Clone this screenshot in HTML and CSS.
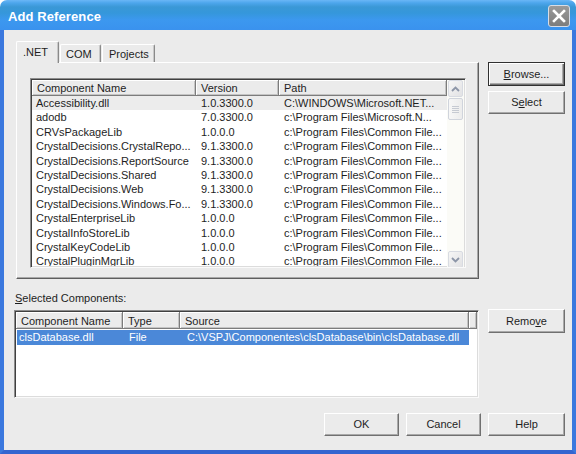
FILE: index.html
```html
<!DOCTYPE html>
<html>
<head>
<meta charset="utf-8">
<link rel="stylesheet" href="styles.css">
</head>
<body>
<div class="window">
  <div class="titlebar">
    <span class="title">Add Reference</span>
    <span class="close">
      <svg width="14" height="14" viewBox="0 0 14 14"><path d="M2 2 L12 12 M12 2 L2 12" stroke="#fff" stroke-width="2.6" stroke-linecap="square"/></svg>
    </span>
  </div>
  <div class="client">
    <div class="top">
      <div class="tabs-area">
        <div class="tabstrip">
          <div class="tab active">.NET</div>
          <div class="tab">COM</div>
          <div class="tab">Projects</div>
        </div>
        <div class="panel">
          <div class="listbox list1">
            <div class="lv-main">
              <div class="lv-head cols1">
                <div class="hcell">Component Name</div>
                <div class="hcell">Version</div>
                <div class="hcell">Path</div>
              </div>
              <div class="lv-body">
                <div class="lv-row cols1 inactive-sel"><span>Accessibility.dll</span><span>1.0.3300.0</span><span>C:\WINDOWS\Microsoft.NET...</span></div>
                <div class="lv-row cols1"><span>adodb</span><span>7.0.3300.0</span><span>c:\Program Files\Microsoft.N...</span></div>
                <div class="lv-row cols1"><span>CRVsPackageLib</span><span>1.0.0.0</span><span>c:\Program Files\Common File...</span></div>
                <div class="lv-row cols1"><span>CrystalDecisions.CrystalRepo...</span><span>9.1.3300.0</span><span>c:\Program Files\Common File...</span></div>
                <div class="lv-row cols1"><span>CrystalDecisions.ReportSource</span><span>9.1.3300.0</span><span>c:\Program Files\Common File...</span></div>
                <div class="lv-row cols1"><span>CrystalDecisions.Shared</span><span>9.1.3300.0</span><span>c:\Program Files\Common File...</span></div>
                <div class="lv-row cols1"><span>CrystalDecisions.Web</span><span>9.1.3300.0</span><span>c:\Program Files\Common File...</span></div>
                <div class="lv-row cols1"><span>CrystalDecisions.Windows.Fo...</span><span>9.1.3300.0</span><span>c:\Program Files\Common File...</span></div>
                <div class="lv-row cols1"><span>CrystalEnterpriseLib</span><span>1.0.0.0</span><span>c:\Program Files\Common File...</span></div>
                <div class="lv-row cols1"><span>CrystalInfoStoreLib</span><span>1.0.0.0</span><span>c:\Program Files\Common File...</span></div>
                <div class="lv-row cols1"><span>CrystalKeyCodeLib</span><span>1.0.0.0</span><span>c:\Program Files\Common File...</span></div>
                <div class="lv-row cols1"><span>CrystalPluginMgrLib</span><span>1.0.0.0</span><span>c:\Program Files\Common File...</span></div>
              </div>
            </div>
            <div class="vscroll">
              <div class="sbtn">
                <svg width="9" height="6" viewBox="0 0 9 6"><path d="M1 5 L4.5 1.5 L8 5" fill="none" stroke="#8d96a8" stroke-width="1.8"/></svg>
              </div>
              <div class="thumb"><span class="grip"></span></div>
              <div class="track"></div>
              <div class="sbtn">
                <svg width="9" height="6" viewBox="0 0 9 6"><path d="M1 1 L4.5 4.5 L8 1" fill="none" stroke="#8d96a8" stroke-width="1.8"/></svg>
              </div>
            </div>
          </div>
        </div>
      </div>
      <div class="side">
        <div class="btn default"><span><u>B</u>rowse...</span></div>
        <div class="btn select-btn"><span>S<u>e</u>lect</span></div>
      </div>
    </div>
    <div class="label"><u>S</u>elected Components:</div>
    <div class="row2">
      <div class="listbox list2">
        <div class="lv-head cols2">
          <div class="hcell">Component Name</div>
          <div class="hcell">Type</div>
          <div class="hcell">Source</div>
          <div class="hcell"></div>
        </div>
        <div class="lv-row2 cols2 sel"><span>clsDatabase.dll</span><span>File</span><span>C:\VSPJ\Componentes\clsDatabase\bin\clsDatabase.dll</span></div>
      </div>
      <div class="btn remove-btn"><span>Remo<u>v</u>e</span></div>
    </div>
    <div class="bottom">
      <div class="btn w75">OK</div>
      <div class="btn w75">Cancel</div>
      <div class="btn w77">Help</div>
    </div>
  </div>
</div>
</body>
</html>
```
FILE: styles.css
```css
* { box-sizing: border-box; }
html, body {
  margin: 0;
  padding: 0;
  background: #ffffff;
}
body {
  font-family: "Liberation Sans", Arial, sans-serif;
  font-size: 11px;
  color: #1e1e1e;
}
.window {
  width: 576px;
  height: 454px;
  display: flex;
  flex-direction: column;
}
.titlebar {
  height: 30px;
  flex: none;
  display: flex;
  align-items: center;
  justify-content: space-between;
  padding: 0 6px 0 8px;
  border-radius: 7px 7px 0 0;
  background: linear-gradient(to bottom, #6ab6f6 0px, #4ca6ec 3px, #3a98d6 7px, #3597db 13px, #3c98ef 20px, #3a92ee 30px);
}
.title {
  color: #ffffff;
  font-weight: bold;
  font-size: 13px;
  letter-spacing: 0.1px;
  padding-top: 2px;
}
.close {
  width: 22px;
  height: 22px;
  border-radius: 3px;
  border: 1px solid #d8dde6;
  background: linear-gradient(to bottom, #9a9a9a, #7d7d7d);
  display: flex;
  align-items: center;
  justify-content: center;
  margin-top: 2px;
}
.client {
  flex: 1;
  background: #ebebeb;
  border-left: 4px solid #3b78de;
  border-right: 4px solid #3b78de;
  border-bottom: 4px solid #3465d0;
  padding: 0 7px 0 10px;
  display: flex;
  flex-direction: column;
}
.top {
  margin-top: 11px;
  display: flex;
}
.tabs-area {
  margin-left: 2px;
  width: 463px;
}
.tabstrip {
  height: 21px;
  display: flex;
  align-items: flex-end;
  position: relative;
  z-index: 2;
}
.tab {
  height: 18px;
  padding: 3px 5px 0 6px;
  background: #ebebeb;
  border-top: 1px solid #ffffff;
  border-left: 1px solid #ffffff;
  border-right: 1px solid #8a8a8a;
  box-shadow: inset -1px 0 #c8c8c8;
  border-radius: 2px 2px 0 0;
  margin-right: 1px;
  line-height: 13px;
}
.tab.active {
  height: 22px;
  width: 43px;
  padding: 4px 0 0 6px;
  margin-bottom: -1px;
}
.tab:nth-child(2) { width: 41px; padding-left: 5px; }
.tab:nth-child(3) { width: 53px; padding-left: 6px; }
.panel {
  height: 217px;
  border-top: 1px solid #ffffff;
  border-left: 1px solid #ffffff;
  border-right: 1px solid #5e5e5e;
  border-bottom: 1px solid #5e5e5e;
  box-shadow: inset -1px -1px #a8a8a8;
  padding: 15px 0 0 13px;
}
.listbox {
  background: #ffffff;
  border-top: 1px solid #8c8c8c;
  border-left: 1px solid #8c8c8c;
  border-right: 1px solid #fafafa;
  border-bottom: 1px solid #fafafa;
  box-shadow: inset 1px 1px #404040, inset -1px -1px #dcdcdc;
  padding: 1px;
  overflow: hidden;
}
.list1 {
  width: 436px;
  height: 190px;
  display: flex;
}
.lv-main {
  width: 415px;
  overflow: hidden;
}
.lv-head {
  display: grid;
  height: 16px;
  background: #ebebeb;
}
.cols1 { grid-template-columns: 164px 83px 168px; }
.cols2 { grid-template-columns: 107px 57px 289px 8px; }
.hcell {
  border-right: 1px solid #7c7c7c;
  border-bottom: 1px solid #7c7c7c;
  box-shadow: inset 1px 1px #ffffff, inset -1px -1px #c4c4c4;
  padding: 1px 0 0 5px;
  line-height: 14px;
  white-space: nowrap;
  overflow: hidden;
}
.lv-body { }
.lv-row {
  display: grid;
  height: 14.4px;
  line-height: 14px;
  white-space: nowrap;
}
.lv-row span, .lv-row2 span {
  padding-left: 4px;
  overflow: hidden;
  white-space: nowrap;
}
.lv-row span:nth-child(2), .lv-row span:nth-child(3) { padding-left: 5px; }
.inactive-sel { background: #ececec; }
.vscroll {
  width: 17px;
  height: 188px;
  background: #fbfbf7;
  display: flex;
  flex-direction: column;
  padding: 0 0 0 0;
}
.sbtn {
  height: 17px;
  margin: 0 1px;
  border: 1px solid #d8dbe2;
  border-radius: 2px;
  background: linear-gradient(to bottom right, #f6f6f6, #e2e2e4);
  display: flex;
  align-items: center;
  justify-content: center;
}
.thumb {
  height: 22px;
  margin: 1px 1px 0 1px;
  border: 1px solid #d0d4dc;
  border-radius: 2px;
  background: linear-gradient(to right, #f7f7f7, #ececec);
  display: flex;
  align-items: center;
  justify-content: center;
}
.grip {
  width: 7px;
  height: 7px;
  background: repeating-linear-gradient(to bottom, #c6cad2 0 1px, transparent 1px 2px);
}
.track { flex: 1; }
.side {
  margin-left: 9px;
  width: 77px;
  padding-top: 21px;
  display: flex;
  flex-direction: column;
}
.btn {
  height: 23px;
  background: #ebebeb;
  border-top: 1px solid #ffffff;
  border-left: 1px solid #ffffff;
  border-right: 1px solid #707070;
  border-bottom: 1px solid #707070;
  box-shadow: inset -1px -1px #a9a9a9;
  display: flex;
  align-items: center;
  justify-content: center;
  line-height: 13px;
}
.btn.default {
  height: 24px;
  border: 1px solid #303030;
  box-shadow: inset 1px 1px #ffffff, inset -1px -1px #707070, inset -2px -2px #a9a9a9;
}
.select-btn { margin-top: 5px; height: 23px; }
.label {
  margin-top: 12px;
  height: 14px;
  line-height: 14px;
  padding-left: 1px;
}
.row2 {
  margin-top: 4px;
  display: flex;
  align-items: flex-start;
}
.list2 {
  margin-top: 1px;
  width: 465px;
  height: 88px;
}
.list2 .lv-head { height: 17px; }
.list2 .hcell { padding-top: 2px; }
.lv-row2 {
  display: grid;
  height: 15px;
  line-height: 15px;
  margin-top: 1px;
  margin-left: 1px;
  width: 452px;
}
.lv-row2.sel {
  background: #4b88d8;
  color: #ffffff;
}
.lv-row2 span:nth-child(1) { padding-left: 2px; }
.lv-row2 span:nth-child(2) { padding-left: 5px; }
.lv-row2 span:nth-child(3) { padding-left: 6px; }
.remove-btn {
  margin-left: 9px;
  width: 77px;
  height: 24px;
}
.bottom {
  margin-top: 15px;
  display: flex;
  justify-content: flex-end;
  gap: 7px;
}
.w75 { width: 75px; }
.w77 { width: 77px; }
u { text-decoration: underline; text-underline-offset: 1px; }
```
